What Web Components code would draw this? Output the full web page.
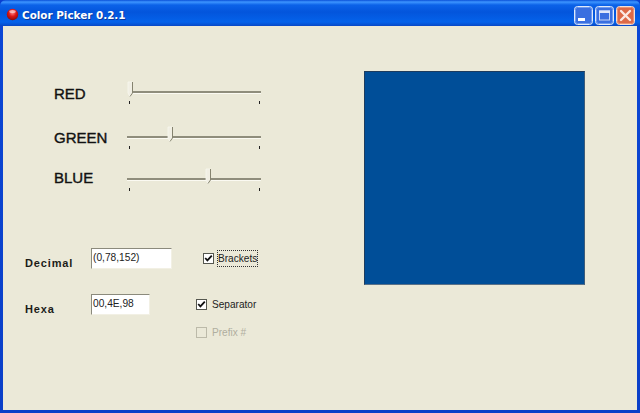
<!DOCTYPE html>
<html><head><meta charset="utf-8"><style>
html,body{margin:0;padding:0;width:640px;height:413px;overflow:hidden;background:#0a3fd0}
</style></head><body>
<xp-window caption="Color Picker 0.2.1">
  <xp-panel>
    <xp-slider label="RED" pos="3" inset="3" lift="3" style="margin-bottom:21px"></xp-slider>
    <xp-slider label="GREEN" pos="43" lift="2" style="margin-bottom:18px"></xp-slider>
    <xp-slider label="BLUE" pos="81" lift="0"></xp-slider>
    <xp-row label="Decimal" value="(0,78,152)" w="81" gap="31" style="margin-top:53px;margin-bottom:25px"><xp-check checked focus>Brackets</xp-check></xp-row>
    <xp-row label="Hexa" value="00,4E,98" w="59" gap="46" style="margin-bottom:7px"><xp-check checked>Separator</xp-check></xp-row>
    <xp-row gap="0" style="padding-left:193px"><xp-check disabled>Prefix #</xp-check></xp-row>
  </xp-panel>
  <xp-swatch color="#004e98"></xp-swatch>
</xp-window>
<script>
function el(name, cls){ customElements.define(name, cls); }
class Base extends HTMLElement{
  render(html){ this.attachShadow({mode:'open'}).innerHTML=html; }
}
el('xp-window', class extends Base{
  connectedCallback(){ this.render(`<style>
    :host{display:flex;flex-direction:column;width:640px;height:413px;box-sizing:border-box;
      background:linear-gradient(#0b47d6,#0a3fc8);border-radius:6px 6px 0 0;overflow:hidden}
    .bar{height:26px;flex:none;display:flex;align-items:center;padding:0 5px 0 6px;box-sizing:border-box;
      background:linear-gradient(#0a50d8 0,#3d95ff 2px,#0b62e8 5px,#0355dc 12px,#0462ea 22px,#0650d0 25px,#0a45c4 26px)}
    .ico{width:13px;height:13px;flex:none;margin-right:3px;margin-top:2px}
    .t{flex:1;color:#fff;font:bold 10.4px/14px "DejaVu Sans",sans-serif;text-shadow:1px 1px 0 #0b3a9c;white-space:nowrap;margin-top:4px}
    .btns{display:flex;gap:2px;margin-top:4px}
    .client{flex:1;display:flex;margin:0 3px 3px 3px;background:#ebe9d8;min-height:0}
    svg{display:block}
  </style>
  <div class="bar">
    <svg class="ico" viewBox="0 0 13 13"><defs><radialGradient id="r" cx=".5" cy=".35" r=".7"><stop offset="0" stop-color="#ff8a8a"/><stop offset=".45" stop-color="#e01818"/><stop offset="1" stop-color="#7c0808"/></radialGradient></defs><circle cx="6.5" cy="6.5" r="5.7" fill="url(#r)"/><ellipse cx="6.5" cy="3.6" rx="3.2" ry="1.5" fill="#fbd0d0" opacity=".75"/></svg>
    <div class="t">${this.getAttribute('caption')}</div>
    <div class="btns">
      <svg width="19" height="19" viewBox="0 0 19 19"><rect x=".5" y=".5" width="18" height="18" rx="3" fill="#3a6fe0" stroke="#dfe9fb"/><rect x="1.5" y="1.5" width="16" height="16" rx="2" fill="none" stroke="#6f9bef"/><rect x="4" y="12" width="7" height="3" fill="#fff"/></svg>
      <svg width="19" height="19" viewBox="0 0 19 19"><rect x=".5" y=".5" width="18" height="18" rx="3" fill="#3a6fe0" stroke="#dfe9fb"/><rect x="1.5" y="1.5" width="16" height="16" rx="2" fill="none" stroke="#6f9bef"/><rect x="4.5" y="5" width="10" height="9" fill="none" stroke="#c7d6f5"/><rect x="4" y="4.5" width="11" height="2.5" fill="#dfe8fb"/></svg>
      <svg width="19" height="19" viewBox="0 0 19 19"><rect x=".5" y=".5" width="18" height="18" rx="3" fill="#dd6a48" stroke="#f2e0d8"/><rect x="1.5" y="1.5" width="16" height="16" rx="2" fill="none" stroke="#eb9274"/><path d="M5 5l9 9M14 5l-9 9" stroke="#fbe9e2" stroke-width="2.4" stroke-linecap="round"/></svg>
    </div>
  </div>
  <div class="client"><slot></slot></div>`); }
});
el('xp-panel', class extends Base{
  connectedCallback(){ this.render(`<style>:host{display:block;width:361px;flex:none;padding-top:58px;box-sizing:border-box}</style><slot></slot>`); }
});
el('xp-slider', class extends Base{
  connectedCallback(){
    const pos=+this.getAttribute('pos'), inset=+(this.getAttribute('inset')||0), lift=+this.getAttribute('lift');
    this.render(`<style>
    :host{display:flex;height:24px;padding-left:51px}
    .l{width:73px;flex:none;font:15px/15px "Liberation Sans",Arial,sans-serif;color:#111;-webkit-text-stroke:.4px #111;padding-top:${lift}px;margin-top:-1px}
    .s{position:relative;width:134px;height:24px;flex:none}
    .track{height:2px;margin:7px 0 0 ${inset}px;background:#8f8d7c;border-bottom:1px solid #fbfaf2}
    .ticks{display:flex;justify-content:space-between;margin:7px 1px 0 2px}
    .ticks i{display:block;width:1px;height:3px;background:#222}
    svg{position:absolute;top:-3px;left:${pos-3}px}
    </style><div class="l">${this.getAttribute('label')}</div>
    <div class="s"><div class="track"></div><div class="ticks"><i></i><i></i></div>
    <svg width="7" height="17" viewBox="0 0 7 17"><path d="M1 1h4.5v11L3 15.5 1 12z" fill="#f1efe4" stroke="#f8f7ef" stroke-width=".8"/><path d="M5.5 1v11L3 15.5" fill="none" stroke="#85836f" stroke-width="1"/></svg></div>`);
  }
});
el('xp-row', class extends Base{
  connectedCallback(){
    const lab=this.getAttribute('label'), val=this.getAttribute('value');
    this.render(`<style>
    :host{display:flex;align-items:center;min-height:21px}
    .l{width:66px;padding:9px 0 0 22px;box-sizing:content-box;align-self:flex-start;flex:none;font:bold 11px/12px "Liberation Sans",Arial,sans-serif;letter-spacing:.85px;color:#1c1c18}
    .i{width:${this.getAttribute('w')}px;height:21px;box-sizing:border-box;flex:none;background:#fff;border:1px solid;border-color:#8b8a7c #f2f0e4 #f2f0e4 #8b8a7c;
       font:10.2px/17px "Liberation Sans",Arial,sans-serif;color:#222;padding:0 0 0 1px;margin-right:${this.getAttribute('gap')}px;white-space:nowrap;overflow:hidden}
    </style>${lab?`<div class="l">${lab}</div><div class="i">${val}</div>`:''}<slot></slot>`);
  }
});
el('xp-check', class extends Base{
  connectedCallback(){
    const c=this.hasAttribute('checked'), d=this.hasAttribute('disabled'), f=this.hasAttribute('focus');
    this.render(`<style>
    :host{display:flex;align-items:center;font:10.1px/13px "Liberation Sans",Arial,sans-serif;color:${d?'#b0ae9f':'#222'};white-space:nowrap}
    .b{width:11px;height:11px;box-sizing:border-box;flex:none;border:1px solid ${d?'#bcbaa9':'#55574f'};background:${d?'#ebe9d8':'#fff'};margin-right:${f?4:5}px}
    .x{display:block;margin:0}
    .t{padding:1px 0;${f?'outline:1px dotted #333;outline-offset:0;':''}}
    </style><div class="b">${c?'<svg class="x" width="9" height="9" viewBox="0 0 9 9"><path d="M1.2 4l2.2 2.4L7.8 1.6" fill="none" stroke="#111" stroke-width="1.8"/></svg>':''}</div><span class="t"><slot></slot></span>`);
  }
});
el('xp-swatch', class extends Base{
  connectedCallback(){ this.render(`<style>:host{display:block;flex:none;width:221px;height:214px;box-sizing:border-box;margin:45px 0 0 0;background:${this.getAttribute('color')};border:1px solid;border-color:#1d3c5e #3d5c7a #5a7188 #1d3c5e}</style>`); }
});
</script>
</body></html>
